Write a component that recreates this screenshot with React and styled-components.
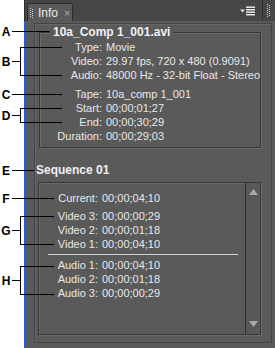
import React from "react";
import styled, { createGlobalStyle } from "styled-components";

const GlobalStyle = createGlobalStyle`
  html, body {
    margin: 0;
    padding: 0;
    background: #ffffff;
  }
  body {
    font-family: "Liberation Sans", Arial, sans-serif;
  }
`;

const fileRows = [
  ["Type:", "Movie"],
  ["Video:", "29.97 fps, 720 x 480 (0.9091)"],
  ["Audio:", "48000 Hz - 32-bit Float - Stereo"],
  null,
  ["Tape:", "10a_comp 1_001"],
  ["Start:", "00;00;01;27"],
  ["End:", "00;00;30;29"],
  ["Duration:", "00;00;29;03"],
];

const callouts = [
  { letter: "A", y: 31, end: 50 },
  { letter: "B", y: 47, y2: 75, end: 62 },
  { letter: "C", y: 94, end: 62 },
  { letter: "D", y: 108, y2: 122, end: 62 },
  { letter: "E", y: 170, end: 34 },
  { letter: "F", y: 198, end: 54 },
  { letter: "G", y: 216, y2: 244, end: 54 },
  { letter: "H", y: 266, y2: 294, end: 54 },
];

const App = () => (
  <Page>
    <GlobalStyle />
    <Gutter />
    <Panel>
      <TabBar>
        <Tab>
          <Dots $h={10} />
          <TabTitle>Info</TabTitle>
          <TabClose>×</TabClose>
        </Tab>
        <TabFill />
        <MenuButton>
          <svg width="15" height="10" viewBox="0 0 15 10">
            <polygon points="0,3.5 5,3.5 2.5,6.5" fill="#e0e0e0" />
            <rect x="6" y="0.5" width="9" height="1.4" fill="#f0f0f0" />
            <rect x="6" y="3" width="9" height="1.4" fill="#f0f0f0" />
            <rect x="6" y="5.5" width="9" height="1.4" fill="#f0f0f0" />
            <rect x="6" y="8" width="9" height="1.4" fill="#f0f0f0" />
          </svg>
        </MenuButton>
        <EdgeGrip>
          <Dots $h={13} />
        </EdgeGrip>
      </TabBar>

      <Body>
        <Frame>
          <ClipGroup>
            <Legend>10a_Comp 1_001.avi</Legend>
            <InfoGrid $label={62}>
              {fileRows.map((row, i) =>
                row ? (
                  <React.Fragment key={i}>
                    <Label>{row[0]}</Label>
                    <Value>{row[1]}</Value>
                  </React.Fragment>
                ) : (
                  <Gap key={i} />
                )
              )}
            </InfoGrid>
          </ClipGroup>

          <Heading>Sequence 01</Heading>

          <SequenceBox>
            <SequenceList>
              <InfoGrid $label={59}>
                <Label>Current:</Label>
                <Value>00;00;04;10</Value>
              </InfoGrid>
              <TrackGrid $label={59}>
                <Label>Video 3:</Label>
                <Value>00;00;00;29</Value>
                <Label>Video 2:</Label>
                <Value>00;00;01;18</Value>
                <Label>Video 1:</Label>
                <Value>00;00;04;10</Value>
              </TrackGrid>
              <Divider />
              <InfoGrid $label={59}>
                <Label>Audio 1:</Label>
                <Value>00;00;04;10</Value>
                <Label>Audio 2:</Label>
                <Value>00;00;01;18</Value>
                <Label>Audio 3:</Label>
                <Value>00;00;00;29</Value>
              </InfoGrid>
            </SequenceList>
            <ScrollBar>
              <svg width="9" height="6" viewBox="0 0 9 6">
                <polygon points="0,6 9,6 4.5,0" fill="#a9a9a9" />
              </svg>
              <svg width="9" height="6" viewBox="0 0 9 6">
                <polygon points="0,0 9,0 4.5,6" fill="#a9a9a9" />
              </svg>
            </ScrollBar>
          </SequenceBox>
        </Frame>
      </Body>
    </Panel>

    {callouts.map((c) =>
      c.y2 ? (
        <Mark key={c.letter} $top={c.y} $height={c.y2 - c.y + 1}>
          <Letter>{c.letter}</Letter>
          <Stub $w={8} />
          <Bracket $w={c.end - 20} />
        </Mark>
      ) : (
        <Mark key={c.letter} $top={c.y - 7} $height={15}>
          <Letter>{c.letter}</Letter>
          <Stub $w={c.end - 12} />
        </Mark>
      )
    )}
  </Page>
);

const Page = styled.div`
  position: relative;
  width: 275px;
  height: 348px;
  overflow: hidden;
  display: flex;
`;

const Gutter = styled.div`
  width: 24px;
  flex: none;
  background: #ffffff;
`;

const Panel = styled.div`
  flex: 1;
  display: flex;
  flex-direction: column;
  background: #5a5a5a;
`;

const TabBar = styled.div`
  height: 21px;
  flex: none;
  display: flex;
  align-items: flex-end;
  background: #464646;
  border-left: 1px solid #2c2c2c;
  padding-left: 2px;
  box-sizing: border-box;
`;

const Tab = styled.div`
  height: 18px;
  width: 46px;
  box-sizing: border-box;
  display: flex;
  align-items: center;
  padding-left: 2px;
  background: #5a5a5a;
  border: 1px solid #2e2e2e;
  border-bottom: none;
  border-radius: 2px 2px 0 0;
`;

const Dots = styled.span`
  width: 3px;
  height: ${(p) => p.$h}px;
  flex: none;
  background:
    repeating-linear-gradient(to bottom, #cfcfcf 0 1px, transparent 1px 2px) left / 1px 100% no-repeat,
    repeating-linear-gradient(to bottom, transparent 0 1px, #cfcfcf 1px 2px) right / 1px 100% no-repeat;
`;

const TabTitle = styled.span`
  margin-left: 5px;
  color: #e8e8e8;
  font-size: 12px;
  line-height: 14px;
`;

const TabClose = styled.span`
  margin-left: 6px;
  color: #b0b0b0;
  font-size: 11px;
  line-height: 12px;
`;

const TabFill = styled.div`
  flex: 1;
`;

const MenuButton = styled.div`
  align-self: center;
  display: flex;
  margin-right: 7px;
  margin-top: 1px;
`;

const EdgeGrip = styled.div`
  width: 13px;
  height: 21px;
  box-sizing: border-box;
  border-left: 1px solid #2e2e2e;
  display: flex;
  align-items: center;
  justify-content: center;
  padding-right: 2px;
`;

const Body = styled.div`
  flex: 1;
  display: flex;
  border-left: 2px solid #1f5fe0;
  min-height: 0;
`;

const Frame = styled.div`
  flex: 1;
  margin: 2px 3px 5px 8px;
  padding: 0 10px 0 4px;
  border: 1px solid #444444;
  box-shadow: inset 1px 1px 0 #666666;
  display: flex;
  flex-direction: column;
  min-width: 0;
`;

const ClipGroup = styled.fieldset`
  margin: 1px 0 0 0;
  padding: 1px 0 4px 0;
  min-width: 0;
  border: 1px solid #383838;
  box-shadow: inset 1px 1px 0 #6a6a6a, 1px 1px 0 #6a6a6a;
`;

const Legend = styled.legend`
  margin-left: 10px;
  padding: 0 3px;
  background: #5a5a5a;
  color: #f0f0f0;
  font-size: 12px;
  font-weight: bold;
  line-height: 14px;
`;

const InfoGrid = styled.div`
  display: grid;
  grid-template-columns: ${(p) => p.$label}px 1fr;
  column-gap: 4px;
  font-size: 11px;
  line-height: 14px;
  color: #e8e8e8;
`;

const TrackGrid = styled(InfoGrid)`
  margin-top: 4px;
`;

const Label = styled.span`
  text-align: right;
  white-space: nowrap;
`;

const Value = styled.span`
  white-space: nowrap;
`;

const Gap = styled.div`
  grid-column: 1 / -1;
  height: 5px;
`;

const Heading = styled.div`
  margin: 15px 0 0 -3px;
  color: #f0f0f0;
  font-size: 12px;
  font-weight: bold;
  line-height: 14px;
`;

const SequenceBox = styled.div`
  margin: 5px 0 0 -1px;
  height: 153px;
  box-sizing: border-box;
  display: flex;
  border: 1px solid #383838;
  box-shadow: inset 1px 1px 0 #6a6a6a, 1px 1px 0 #6a6a6a;
`;

const SequenceList = styled.div`
  flex: 1;
  padding-top: 8px;
  min-width: 0;
`;

const Divider = styled.div`
  height: 1px;
  margin: 3px 7px 3px 9px;
  background: #d4d4d4;
`;

const ScrollBar = styled.div`
  width: 15px;
  flex: none;
  border-left: 1px solid #2f2f2f;
  background: #585858;
  display: flex;
  flex-direction: column;
  align-items: center;
  justify-content: space-between;
  padding: 6px 0 7px;
  box-sizing: border-box;
`;

const Mark = styled.div`
  position: absolute;
  left: 0;
  top: ${(p) => p.$top}px;
  height: ${(p) => p.$height}px;
  display: flex;
  align-items: center;
  z-index: 2;
`;

const Letter = styled.span`
  width: 12px;
  text-align: center;
  color: #000000;
  font-size: 12px;
  font-weight: bold;
  line-height: 14px;
`;

const Stub = styled.span`
  width: ${(p) => p.$w}px;
  height: 1px;
  background: #000000;
`;

const Bracket = styled.span`
  align-self: stretch;
  width: ${(p) => p.$w}px;
  box-sizing: border-box;
  border: 1px solid #000000;
  border-right: none;
`;

export default App;
